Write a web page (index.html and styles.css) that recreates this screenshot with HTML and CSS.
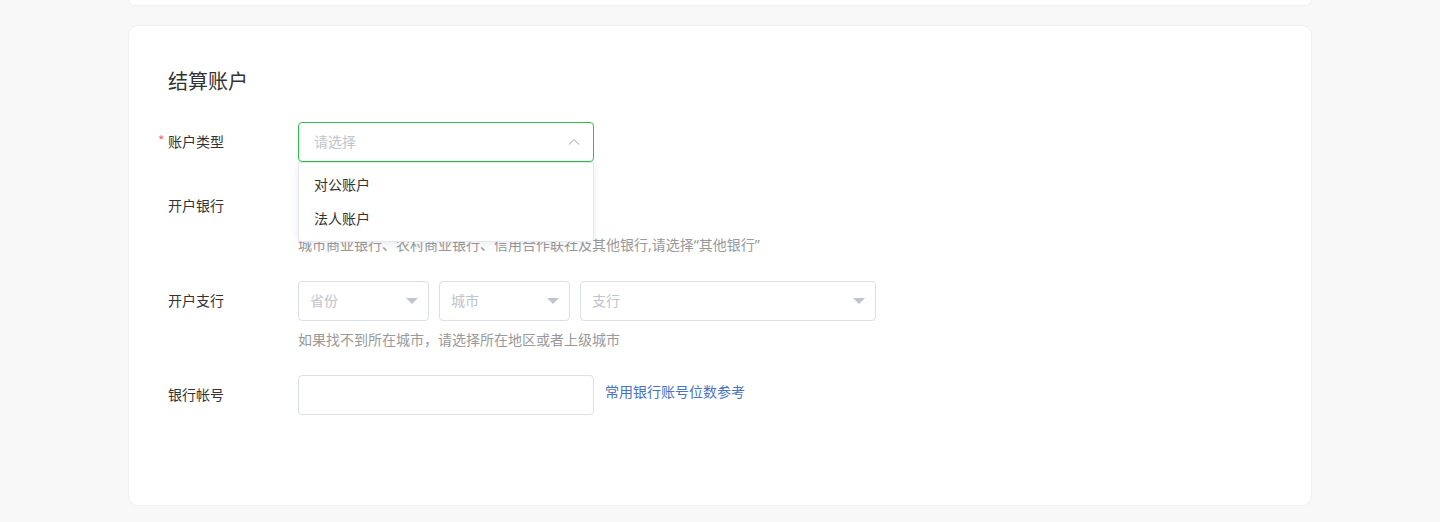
FILE: index.html
```html
<!DOCTYPE html>
<html lang="zh-CN">
<head>
  <meta charset="UTF-8">
  <meta name="viewport" content="width=device-width, initial-scale=1.0">
  <title>结算账户</title>
  <link rel="stylesheet" href="styles.css">
</head>
<body>

  <div class="page">
    <div class="card card-prev"></div>

    <div class="card">
      <h2 class="card-title">结算账户</h2>

      <!-- 账户类型 -->
      <div class="form-row">
        <label class="form-label required">账户类型</label>
        <div class="form-field">
          <div class="select select-wide is-focus">
            <span class="select-text">请选择</span>
            <svg class="select-arrow-up" width="12" height="8" viewBox="0 0 12 8">
              <path d="M1 6.5 L6 1.5 L11 6.5" fill="none" stroke="#c0c4cc" stroke-width="1.2"/>
            </svg>
            <ul class="dropdown">
              <li>对公账户</li>
              <li>法人账户</li>
            </ul>
          </div>
        </div>
      </div>

      <!-- 开户银行 (select hidden under the open dropdown) -->
      <div class="form-row">
        <label class="form-label">开户银行</label>
        <div class="form-field">
          <div class="select select-wide">
            <span class="select-text"></span>
            <span class="caret"></span>
          </div>
          <div class="hint">城市商业银行、农村商业银行、信用合作联社及其他银行<span class="latin">,</span>请选择<span class="latin">“</span>其他银行<span class="latin">”</span></div>
        </div>
      </div>

      <!-- 开户支行 -->
      <div class="form-row">
        <label class="form-label">开户支行</label>
        <div class="form-field">
          <div class="select-group">
            <div class="select select-small">
              <span class="select-text">省份</span>
              <span class="caret"></span>
            </div>
            <div class="select select-small">
              <span class="select-text">城市</span>
              <span class="caret"></span>
            </div>
            <div class="select select-wide">
              <span class="select-text">支行</span>
              <span class="caret"></span>
            </div>
          </div>
          <div class="hint">如果找不到所在城市，请选择所在地区或者上级城市</div>
        </div>
      </div>

      <!-- 银行帐号 -->
      <div class="form-row">
        <label class="form-label">银行帐号</label>
        <div class="form-field inline">
          <input class="input" type="text">
          <a class="link" href="#">常用银行账号位数参考</a>
        </div>
      </div>
    </div>
  </div>

</body>
</html>
```

FILE: styles.css
```css
body {
  margin: 0;
  padding: 0;
  background-color: #f8f8f8;
  font-family: "Noto Sans CJK SC", "Noto Sans", sans-serif;
  color: #333;
}
.page {
  width: 1184px;
  margin: 0 auto;
}
.card {
  box-sizing: border-box;
  height: 481px;
  padding: 41px 39px 0;
  background-color: #fff;
  border: 1px solid #f0f0f0;
  border-radius: 10px;
}
.card-prev {
  height: 6px;
  padding: 0;
  margin-bottom: 19px;
  border-top: none;
  border-radius: 0 0 10px 10px;
}
.card-title {
  margin: 0 0 27px;
  font-size: 20px;
  line-height: 28px;
  font-weight: normal;
  color: #333;
}
.form-row {
  display: flex;
  margin-bottom: 24px;
}
.form-label {
  position: relative;
  width: 130px;
  height: 40px;
  flex-shrink: 0;
  font-size: 14px;
  line-height: 38px;
  color: #333;
}
.form-label.required::before {
  content: "*";
  position: absolute;
  left: -10px;
  top: -1px;
  color: #f56c6c;
}
.form-field.inline {
  display: flex;
  align-items: center;
}
.select {
  position: relative;
  box-sizing: border-box;
  display: flex;
  align-items: center;
  height: 40px;
  padding: 0 10px 0 15px;
  border: 1px solid #dcdfe6;
  border-radius: 4px;
  background-color: #fff;
}
.select-wide {
  width: 296px;
}
.select-small {
  width: 131px;
  padding-left: 11px;
}
.select-group .select-wide {
  padding-left: 11px;
}
.select.is-focus {
  border-color: #2bc148;
}
.select-text {
  flex: 1;
  margin-top: -2px;
  font-size: 14px;
  color: #c0c4cc;
}
.select-arrow-up {
  margin-right: 3px;
}
.caret {
  width: 0;
  height: 0;
  border-left: 6px solid transparent;
  border-right: 6px solid transparent;
  border-top: 6px solid #c0c4cc;
}
.select-group {
  display: flex;
  gap: 10px;
}
.dropdown {
  position: absolute;
  top: 39px;
  left: -1px;
  z-index: 10;
  box-sizing: border-box;
  width: 296px;
  margin: 0;
  padding: 4px 0 6px;
  list-style: none;
  background-color: #fff;
  border: 1px solid #e4e7ed;
  border-radius: 0 0 4px 4px;
  box-shadow: 0 2px 8px rgba(0, 0, 0, 0.08);
}
.dropdown li {
  padding: 0 15px;
  font-size: 14px;
  line-height: 34px;
  color: #333;
}
.hint {
  margin: 8px 0 2px;
  font-size: 14px;
  line-height: 20px;
  color: #999;
}
.hint .latin {
  font-family: "Noto Sans", sans-serif;
}
.input {
  box-sizing: border-box;
  width: 296px;
  height: 40px;
  border: 1px solid #dcdfe6;
  border-radius: 4px;
  outline: none;
}
.link {
  margin: 0 0 8px 11px;
  font-size: 14px;
  color: #4a72c2;
  text-decoration: none;
}
```
